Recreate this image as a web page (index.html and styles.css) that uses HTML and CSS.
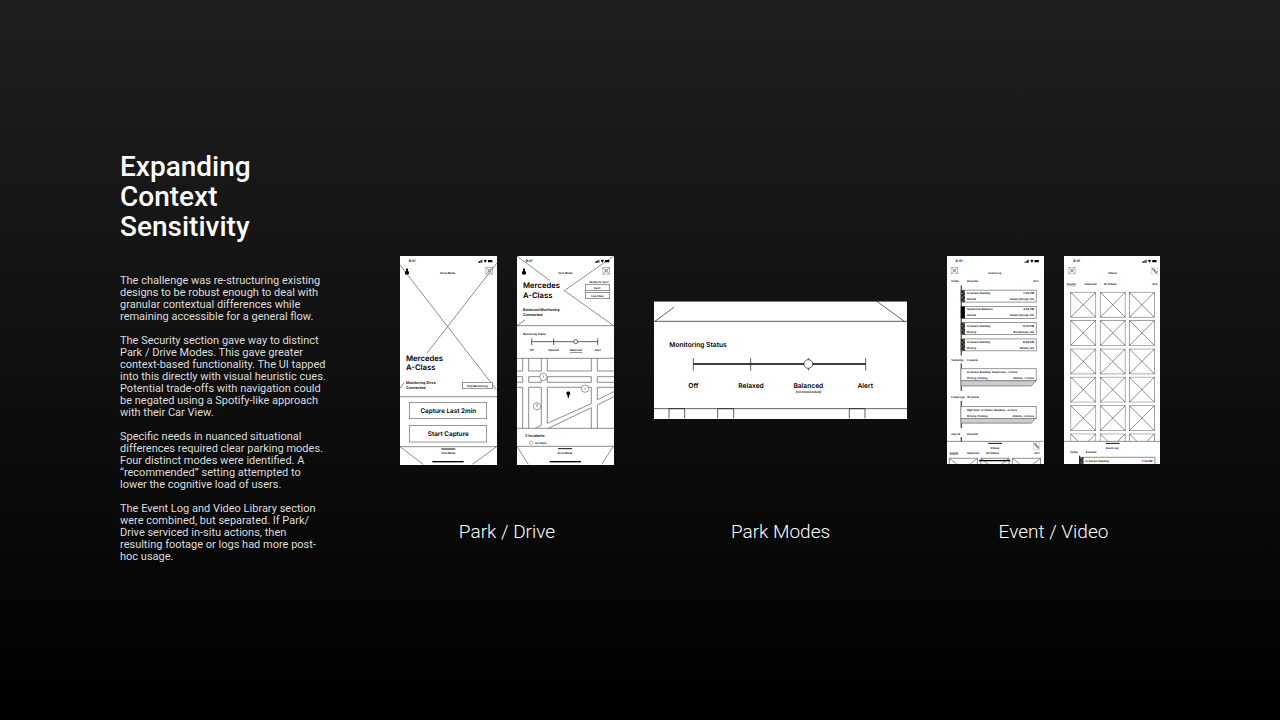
FILE: index.html
```html
<!DOCTYPE html>
<html lang="en">
<head>
<meta charset="utf-8">
<meta name="viewport" content="width=device-width, initial-scale=1">
<title>Expanding Context Sensitivity</title>
<link rel="stylesheet" href="styles.css">
</head>
<body>
<svg class="defs" aria-hidden="true">
  <defs>
    <symbol id="status" viewBox="0 0 46 12">
      <path d="M0 8h3v3H0zM4 6h3v5H4zM8 4h3v7H8zM12 2h2v9h-2zM18 4q5-4 10 0l-5 7z M31 3h13v7H31z"/>
    </symbol>
    <symbol id="person" viewBox="0 0 14 20">
      <path d="M7 0c3 0 4 3 3 6l-1 2c3 1 5 3 5 6 0 4-3 5-7 5s-7-1-7-5c0-3 2-5 5-6L4 6C3 3 4 0 7 0z"/>
    </symbol>
    <symbol id="cross" viewBox="0 0 22 22">
      <path class="thin" d="M1 1h20v20H1zM1 1l20 20M21 1 1 21"/><path class="thin" d="M8 8h6v6H8z"/>
    </symbol>
    <symbol id="link" viewBox="0 0 22 22">
      <path class="dots" d="M1 1h20v20H1z"/><path class="line" d="M4 4l6 1 2 6-5-1zM11 10l6 2 1 6-6-3z"/>
    </symbol>
    <symbol id="thumb" viewBox="0 0 78 78">
      <path class="line" d="M1 1h76v76H1zM1 1l76 76M77 1 1 77"/><path class="thin" d="M4 1v3H1M74 1v3h3M1 74h3v3M77 74h-3v3"/>
    </symbol>
    <symbol id="pin" viewBox="0 0 14 20">
      <path d="M7 0a6 6 0 0 1 6 6c0 4-4 5-4 9v4H5v-4c0-4-4-5-4-9a6 6 0 0 1 6-6z"/>
    </symbol>
    <pattern id="hatch" width="4" height="4" patternUnits="userSpaceOnUse">
      <rect width="4" height="4" fill="#777"/><path d="M0 0h2v2H0zM2 2h2v2H2z"/>
    </pattern>
  </defs>
</svg>
<main class="slide">
  <section class="copy">
    <h1>Expanding<br>Context<br>Sensitivity</h1>
    <p>The challenge was re-structuring existing<br>designs to be robust enough to deal with<br>granular contextual differences while<br>remaining accessible for a general flow.</p>
    <p>The Security section gave way to distinct<br>Park / Drive Modes. This gave greater<br>context-based functionality. The UI tapped<br>into this directly with visual heuristic cues.<br>Potential trade-offs with navigation could<br>be negated using a Spotify-like approach<br>with their Car View.</p>
    <p>Specific needs in nuanced situational<br>differences required clear parking modes.<br>Four distinct modes were identified. A<br>“recommended” setting attempted to<br>lower the cognitive load of users.</p>
    <p>The Event Log and Video Library section<br>were combined, but separated. If Park/<br>Drive serviced in-situ actions, then<br>resulting footage or logs had more post-<br>hoc usage.</p>
  </section>
  <section class="gallery">
    <figure>
      <div class="art">
        <svg class="screen" viewBox="0 0 291 627">
          <path class="line" d="M0 27 289 401M290 22 82 290M0 397l12-17M0 422h291M0 572h291M0 572l70 53M290 572l-73 53"/>
          <text class="s10" x="26" y="15">9:41</text>
          <use href="#status" x="233" y="9" width="46" height="12"/>
          <use href="#person" x="14" y="37" width="14" height="20"/>
          <text class="s8 mid" x="143" y="50">Drive Mode</text>
          <use href="#cross" x="256" y="33" width="23" height="23"/>
          <text class="s23" x="18" y="306">Mercedes</text>
          <text class="s23" x="18" y="335">A-Class</text>
          <text class="s11" x="18" y="379">Monitoring Drive</text>
          <text class="s11" x="18" y="394">Connected</text>
          <rect class="box" x="187" y="379" width="90" height="19"/>
          <text class="s8 mid" x="232" y="389">Stop Monitoring</text>
          <rect class="box" x="28" y="439" width="232" height="49"/>
          <text class="s19 mid" x="145" y="464">Capture Last 2min</text>
          <rect class="box" x="28" y="509" width="232" height="49"/>
          <text class="s19 mid" x="145" y="534">Start Capture</text>
          <path class="bar" d="M124 579h42"/>
          <text class="s8 mid" x="145" y="592">Park Mode</text>
          <path class="home" d="M97 617h94"/>
        </svg>
        <svg class="screen" viewBox="0 0 291 627">
          <path class="line" d="M0 0 99 74M290 0 142 104 290 209M0 209l24-17M0 209h291M0 307h291M0 517h291M0 571h291M0 571l34 54M289 571l-35 54"/>
          <text class="s10" x="26" y="15">9:41</text>
          <use href="#status" x="233" y="9" width="46" height="12"/>
          <use href="#person" x="14" y="37" width="14" height="20"/>
          <text class="s8 mid" x="145" y="50">Park Mode</text>
          <use href="#cross" x="256" y="33" width="23" height="23"/>
          <text class="s23" x="18" y="89">Mercedes</text>
          <text class="s23" x="18" y="119">A-Class</text>
          <text class="s11" x="18" y="162">Balanced Monitoring</text>
          <text class="s11" x="18" y="177">Connected</text>
          <text class="s8 end" x="276" y="77">Ready for Sync</text>
          <rect class="box" x="205" y="85" width="73" height="19"/>
          <text class="s8 mid" x="241" y="95">Sync</text>
          <rect class="box" x="205" y="109" width="73" height="19"/>
          <text class="s8 mid" x="241" y="119">Live View</text>
          <text class="s8" x="18" y="235">Monitoring Status</text>
          <path class="line dark" d="M44 257h198M44 247v20M110 247v20M242 247v20"/>
          <circle class="box dark" cx="176" cy="257" r="6"/>
          <text class="s8 mid" x="44" y="282">Off</text>
          <text class="s8 mid" x="110" y="282">Relaxed</text>
          <text class="s8 mid" x="177" y="282">Balanced</text>
          <text class="s5 mid" x="177" y="290">(recommended)</text>
          <text class="s8 mid" x="242" y="282">Alert</text>
          <path class="line" d="M0 345h17v-38M35 307v38h38v-38M91 307v38h132v-38M241 307v38h50M0 362h17v17H0M35 362h38v17H35zM91 362h132v17H91zM291 362h-50v17h50M0 394h17v123M35 517V394h38v114l-18 9M91 394h132v49L91 502zM94 517l129-62v62M291 394h-50v37l50-24M241 517v-70l50-25"/>
          <circle class="box" cx="79" cy="363" r="11"/><text class="s10 mid" x="79" y="363">!</text>
          <circle class="box" cx="204" cy="398" r="11"/><text class="s10 mid" x="204" y="398">!</text>
          <circle class="box" cx="60" cy="451" r="11"/><text class="s10 mid" x="60" y="451">?</text>
          <use href="#pin" x="147" y="406" width="14" height="20"/>
          <text class="s11" x="24" y="540">3 Incidents</text>
          <circle class="thin" cx="42" cy="560" r="5"/>
          <text class="s8" x="54" y="560">Accident</text>
          <path class="bar" d="M123 578h42"/>
          <text class="s8 mid" x="144" y="592">Drive Mode</text>
          <path class="home" d="M98 617h94"/>
        </svg>
      </div>
      <figcaption>Park / Drive</figcaption>
    </figure>
    <figure>
      <div class="art">
        <svg class="screen" viewBox="0 0 759 352">
          <path class="line dark" d="M0 1h759M0 61h759M3 61l58-43M667 0l84 61M0 323h759M45 352v-29h47v29M191 352v-29h48v29M586 352v-29h47v29"/>
          <text class="s20" x="46" y="131">Monitoring Status</text>
          <path class="home" d="M118 189h517"/>
          <path class="line dark" d="M118 171v38M290 171v38M463 171v38M635 171v38"/>
          <circle class="box dark" cx="463" cy="189" r="13"/>
          <text class="s20 mid" x="118" y="254">Off</text>
          <text class="s20 mid" x="291" y="254">Relaxed</text>
          <text class="s20 mid" x="463" y="254">Balanced</text>
          <text class="s10 mid" x="463" y="274">(recommended)</text>
          <text class="s20 mid" x="634" y="254">Alert</text>
        </svg>
      </div>
      <figcaption>Park Modes</figcaption>
    </figure>
    <figure>
      <div class="art">
        <svg class="screen" viewBox="0 0 291 627">
          <text class="s10" x="26" y="15">9:41</text>
          <use href="#status" x="233" y="9" width="46" height="12"/>
          <use href="#cross" x="11" y="33" width="22" height="22"/>
          <text class="s8 mid" x="144" y="51">Event Log</text>
          <text class="s8" x="12" y="76">Today</text>
          <text class="s8" x="60" y="76">4 events</text>
          <text class="s8 end" x="276" y="76">Sort</text>
          <path class="bar" d="M43 89v211M43 324v83M43 437v82M43 546v13"/>
          <rect class="box" x="42" y="103" width="227" height="36"/>
          <rect x="42" y="103" width="12" height="36" fill="url(#hatch)"/>
          <text class="s8" x="60" y="112">G-Sensor Reading</text><text class="s8 end" x="262" y="112">5:29 PM</text>
          <text class="s8" x="60" y="130">Parked</text><text class="s8 end" x="262" y="130">Sandy Springs, GA</text>
          <rect class="box" x="42" y="152" width="227" height="36"/>
          <rect x="42" y="152" width="12" height="36"/>
          <text class="s8" x="60" y="161">Suspicious Behavior</text><text class="s8 end" x="262" y="161">3:29 PM</text>
          <text class="s8" x="60" y="179">Parked</text><text class="s8 end" x="262" y="179">Sandy Springs, GA</text>
          <rect class="box" x="42" y="201" width="227" height="36"/>
          <rect x="42" y="201" width="12" height="36" fill="url(#hatch)"/>
          <text class="s8" x="60" y="210">G-Sensor Reading</text><text class="s8 end" x="262" y="210">12:01 PM</text>
          <text class="s8" x="60" y="228">Driving</text><text class="s8 end" x="262" y="228">Brookhaven, GA</text>
          <rect class="box" x="42" y="250" width="227" height="36"/>
          <rect x="42" y="250" width="12" height="36" fill="url(#hatch)"/>
          <text class="s8" x="60" y="259">G-Sensor Reading</text><text class="s8 end" x="262" y="259">8:38 AM</text>
          <text class="s8" x="60" y="277">Driving</text><text class="s8 end" x="262" y="277">Atlanta, GA</text>
          <text class="s8" x="12" y="313">Yesterday</text><text class="s8" x="60" y="313">2 events</text>
          <path class="stack" d="M42 376h227l-15 16H42z"/>
          <rect class="box" x="42" y="340" width="227" height="36"/>
          <text class="s8" x="60" y="349">G-Sensor Reading, Suspicious, +1 more</text>
          <text class="s8" x="60" y="368">Driving, Parking</text><text class="s8 end" x="262" y="368">Atlanta, +1 more</text>
          <text class="s8" x="12" y="425">2 days ago</text><text class="s8" x="60" y="425">10 events</text>
          <path class="stack" d="M42 489h227l-15 15H42z"/>
          <rect class="box" x="42" y="454" width="227" height="36"/>
          <text class="s8" x="60" y="463">High Alert, G-Sensor Reading, +3 more</text>
          <text class="s8" x="60" y="481">Driving, Parking</text><text class="s8 end" x="262" y="481">Atlanta, +3 more</text>
          <text class="s8" x="12" y="536">July 14</text><text class="s8" x="60" y="536">4 events</text>
          <path class="line" d="M0 559h291M7 627v-17h85v17M7 610l22 17M92 610l-22 17M102 627v-17h85v17M102 610l22 17M187 610l-22 17M197 627v-17h85v17M197 610l22 17M282 610l-22 17"/>
          <path class="bar" d="M124 565h42"/>
          <text class="s8 mid" x="144" y="578">Videos</text>
          <use href="#link" x="259" y="562" width="22" height="22"/>
          <text class="s8 under" x="8" y="594">Events</text><text class="s8" x="60" y="594">Captured</text><text class="s8 mid" x="137" y="594">All Videos</text><text class="s8 end" x="279" y="594">Sort</text>
          <path class="home" d="M97 617h94"/>
        </svg>
        <svg class="screen" viewBox="0 0 291 627">
          <text class="s10" x="28" y="15">9:41</text>
          <use href="#status" x="235" y="9" width="46" height="12"/>
          <use href="#cross" x="13" y="33" width="22" height="22"/>
          <text class="s8 mid" x="146" y="50">Videos</text>
          <use href="#link" x="262" y="34" width="22" height="22"/>
          <text class="s8 under" x="9" y="85">Events</text><text class="s8" x="62" y="85">Captured</text><text class="s8 mid" x="139" y="85">All Videos</text><text class="s8 end" x="282" y="85">Sort</text>
          <g id="row"><use href="#thumb" x="19" y="108" width="78" height="78"/><use href="#thumb" x="108" y="108" width="78" height="78"/><use href="#thumb" x="196" y="108" width="78" height="78"/></g>
          <use href="#row" y="85"/>
          <use href="#row" y="171"/>
          <use href="#row" y="256"/>
          <use href="#row" y="342"/>
          <use href="#row" y="427"/>
          <path class="panel" d="M0 559h291v68H0z"/>
          <path class="line" d="M0 559h291"/>
          <path class="bar" d="M126 565h42"/>
          <text class="s8 mid" x="145" y="578">Event Log</text>
          <text class="s8" x="18" y="590">Today</text>
          <text class="s8" x="65" y="590">4 events</text>
          <path class="line" d="M47 627v-20h227v20"/>
          <path class="bar" d="M47 602v25"/>
          <rect x="47" y="607" width="12" height="20" fill="url(#hatch)"/>
          <text class="s8" x="65" y="617">G-Sensor Reading</text><text class="s8 end" x="267" y="617">5:29 PM</text>
        </svg>
      </div>
      <figcaption>Event / Video</figcaption>
    </figure>
  </section>
</main>
</body>
</html>
```
FILE: styles.css
```css
* { box-sizing: border-box; }
body {
  margin: 0;
  min-height: 100vh;
  color: #fff;
  background: linear-gradient(#1f1f1f, #101010 50%, #000) #000;
  font-family: Roboto, "Liberation Sans", sans-serif;
}
.defs { position: absolute; width: 0; height: 0; }
.slide {
  display: grid;
  grid-template-columns: 200px 1fr;
  gap: 80px;
  padding: 152px 120px 0;
}
h1 {
  margin: 0 0 33px;
  font-size: 28px;
  font-weight: 500;
  line-height: 30px;
}
.copy p {
  margin: 0 0 12px;
  font-size: 11px;
  line-height: 12px;
  color: #ddd;
  white-space: nowrap;
}
.gallery {
  display: grid;
  grid-template-columns: 214fr 253fr 213fr;
  gap: 40px;
  margin-top: 103px;
}
figure { display: flex; flex-direction: column; margin: 0; }
.art { display: flex; gap: 20px; align-items: center; min-height: 210px; }
.screen { display: block; flex: 1; min-width: 0; background: #fff; }
figcaption {
  margin-top: 55px;
  font-size: 19px;
  font-weight: 300;
  line-height: 24px;
  text-align: center;
}
.screen text {
  font-family: Inter, "Liberation Sans", sans-serif;
  font-weight: 600;
  fill: #000;
  dominant-baseline: central;
  text-rendering: geometricPrecision;
}
.screen .s5 { font-size: 5px; }
.screen .s8 { font-size: 8px; }
.screen .s10 { font-size: 10px; }
.screen .s11 { font-size: 11px; }
.screen .s19 { font-size: 19px; }
.screen .s20 { font-size: 20px; }
.screen .s23 { font-size: 23px; }
.mid { text-anchor: middle; }
.end { text-anchor: end; }
.under { text-decoration: underline; }
.line, .thin, .dots { fill: none; stroke: #555; stroke-width: 2; }
.thin { stroke: #888; }
.dots { stroke: #888; stroke-dasharray: 3 2; }
.box { fill: #fff; stroke: #666; stroke-width: 2; }
.dark { stroke: #111; stroke-width: 2; }
.bar { fill: none; stroke: #111; stroke-width: 3; }
.home { fill: none; stroke: #000; stroke-width: 4; }
.stack { fill: #ccc; stroke: #666; stroke-width: 2; }
.panel { fill: #fff; }
```
